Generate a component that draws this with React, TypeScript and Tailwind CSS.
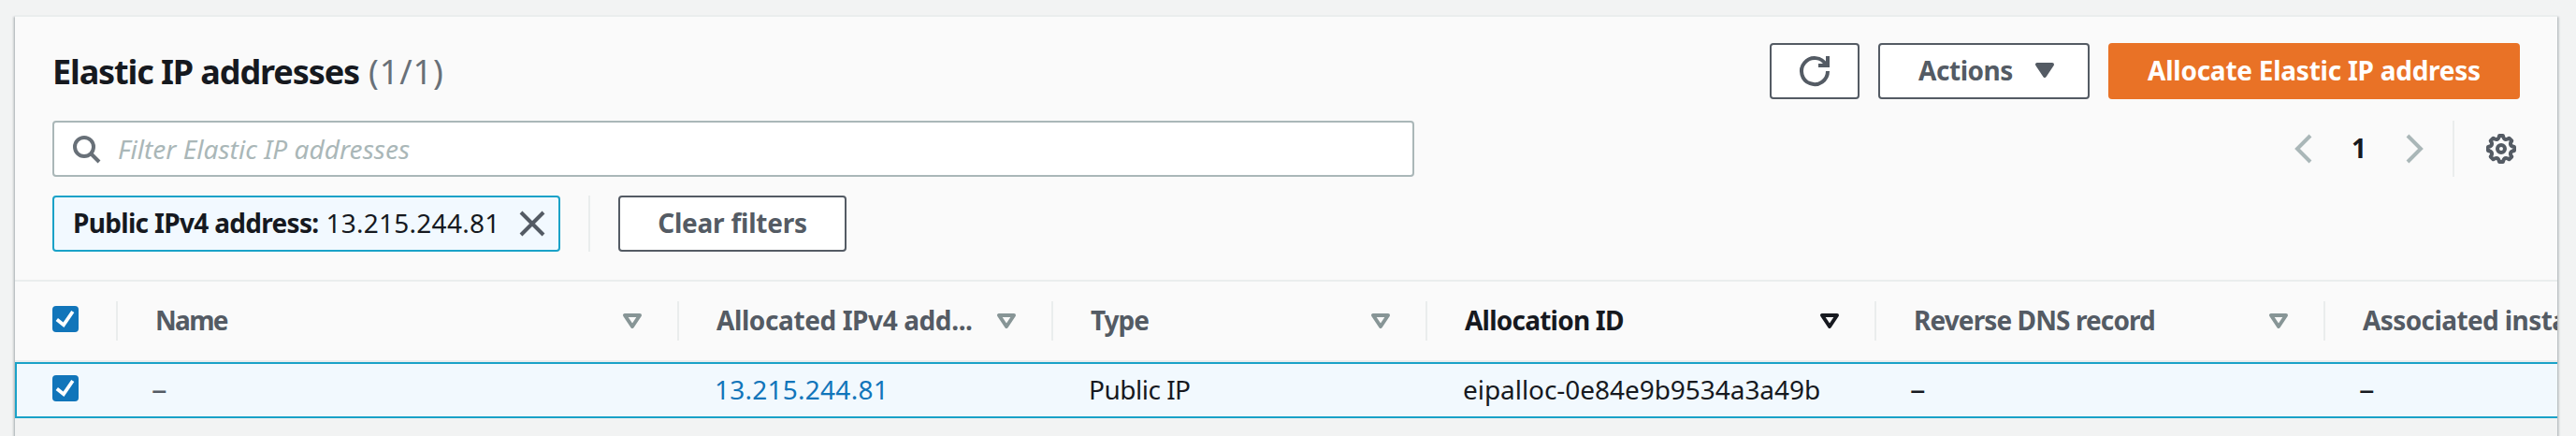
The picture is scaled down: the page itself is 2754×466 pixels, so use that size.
import type { ReactNode } from "react";

function Icon({ children, className = "" }: { children: ReactNode; className?: string }) {
  return (
    <svg
      viewBox="0 0 16 16"
      className={`block size-8 shrink-0 overflow-visible fill-none stroke-current stroke-2 ${className}`}
    >
      {children}
    </svg>
  );
}

function polar(radius: number, degrees: number) {
  const a = (degrees * Math.PI) / 180;
  return `${(8 + radius * Math.cos(a)).toFixed(2)} ${(8 + radius * Math.sin(a)).toFixed(2)}`;
}

const gearPath =
  Array.from({ length: 8 }, (_, k) => {
    const c = k * 45;
    return `${k === 0 ? "M" : "L"}${polar(7.07, c - 8)}L${polar(7.07, c + 8)}Q${polar(4.1, c + 22.5)} ${polar(7.07, c + 37)}`;
  }).join("") + "Z";

function SortIcon({ className = "" }: { className?: string }) {
  return (
    <Icon className={className}>
      <path d="M4 5h8l-4 6z" strokeLinejoin="round" />
    </Icon>
  );
}

function Checkbox() {
  return (
    <span className="block size-7 shrink-0 rounded-[4px] bg-[#1175ba]">
      <svg viewBox="0 0 28 28" className="block size-7 fill-none stroke-white stroke-[3.8]">
        <path d="M4.8 14.5L12 20.3L21.8 6" />
      </svg>
    </span>
  );
}

function Dash({ className = "" }: { className?: string }) {
  return <span className={`-ml-[2px] block text-[33px] leading-[40px] ${className}`}>–</span>;
}

type Column = {
  label: string;
  width: string;
  tracking: string;
  value: ReactNode;
  active?: boolean;
};

const columns: Column[] = [
  { label: "Name", width: "w-[600px]", tracking: "tracking-[-1.7px]", value: <Dash className="text-[#545b64]" /> },
  {
    label: "Allocated IPv4 add...",
    width: "w-[400px]",
    tracking: "tracking-[-0.4px]",
    value: <a className="tracking-[0.25px] text-[#1175ba]">13.215.244.81</a>,
  },
  { label: "Type", width: "w-[400px]", tracking: "tracking-[-1px]", value: <span className="tracking-[-0.5px]">Public IP</span> },
  {
    label: "Allocation ID",
    width: "w-[480px]",
    tracking: "tracking-[-0.77px]",
    value: <span className="tracking-[-0.05px]">eipalloc-0e84e9b9534a3a49b</span>,
    active: true,
  },
  { label: "Reverse DNS record", width: "w-[480px]", tracking: "tracking-[-0.9px]", value: <Dash /> },
  { label: "Associated instance ID", width: "w-[480px]", tracking: "tracking-[-0.6px]", value: <Dash /> },
];

const button =
  "flex h-[60px] items-center justify-center rounded-[4px] border-2 border-[#545b64] bg-white pb-[2px] font-bold text-[#545b64]";

export default function App() {
  return (
    <div className="h-[466px] w-[2754px] overflow-hidden bg-[#f2f3f3] pt-4 pr-5 pl-4 font-['Noto_Sans',sans-serif] text-[28px] leading-[40px] whitespace-nowrap text-[#16191f]">
      <section className="h-[500px] border-t-2 border-[#eaeded] shadow-[0_2px_2px_0_rgba(0,28,36,0.3),2px_2px_2px_0_rgba(0,28,36,0.15),-2px_2px_2px_0_rgba(0,28,36,0.15)]">
        <div className="h-[283px] border-b-2 border-[#eaeded] bg-[#fafafa] px-10 pt-7">
          <div className="flex h-[60px] justify-between">
            <h2 className="flex h-[60px] items-center text-[36px] leading-[41px] font-bold">
              <span className="tracking-[-1.11px]">Elastic IP addresses</span>
              <span className="ml-[10px] font-normal tracking-[0.9px] text-[#687078]">(1/1)</span>
            </h2>
            <div className="flex gap-5">
              <button className="flex h-[60px] w-24 items-start justify-center rounded-[4px] border-2 border-[#545b64] bg-white pt-3 text-[#545b64]">
                <Icon>
                  <path d="M10 5h5V0M15 8a7 7 0 1 1-.9-3.4" />
                </Icon>
              </button>
              <button className={`${button} w-[226px] gap-[18px] pl-[11px]`}>
                <span className="tracking-[-0.45px]">Actions</span>
                <Icon>
                  <path d="M4 5h8l-4 6z" fill="currentColor" strokeLinejoin="round" />
                </Icon>
              </button>
              <button className="flex h-[60px] w-[440px] items-center justify-center rounded-[4px] bg-[#e97226] pb-[2px] font-bold tracking-[-0.25px] text-white">
                Allocate Elastic IP address
              </button>
            </div>
          </div>

          <div className="mt-[23px] flex h-[60px] justify-between">
            <div className="flex h-[60px] w-[1456px] items-center rounded-[4px] border-2 border-[#aab7b8] bg-white pl-[18px]">
              <Icon className="text-[#687078]">
                <circle cx="7" cy="7" r="5" />
                <path d="M15 15l-4.5-4.5" />
              </Icon>
              <span className="ml-[18px] text-[#aab7b8] italic tracking-[0.04px]">Filter Elastic IP addresses</span>
            </div>
            <div className="flex items-center">
              <Icon className="text-[#aab7b8]">
                <path d="M12 1L5 8l7 7" />
              </Icon>
              <span className="w-[88px] pb-[2px] text-center font-bold">1</span>
              <Icon className="text-[#aab7b8]">
                <path d="M4 1l7 7-7 7" />
              </Icon>
              <span className="mr-[34px] ml-6 h-[60px] w-0.5 bg-[#eaeded]" />
              <Icon className="mr-1 text-[#545b64]">
                <circle cx="8" cy="8" r="2" />
                <path d={gearPath} strokeLinejoin="round" />
              </Icon>
            </div>
          </div>

          <div className="mt-5 flex h-[60px]">
            <div className="flex h-[60px] w-[543px] items-start rounded-[4px] border-2 border-[#1aa2c8] bg-[#f2f9ff] pt-[7px] pl-5">
              <span className="font-bold tracking-[-0.68px]">Public IPv4 address:</span>
              <span className="ml-[8px] tracking-[0.25px]">13.215.244.81</span>
              <Icon className="mt-[5px] mr-[12px] ml-auto text-[#545b64]">
                <path d="M2 2l12 12M14 2L2 14" />
              </Icon>
            </div>
            <span className="mx-[30px] w-0.5 bg-[#eaeded]" />
            <button className={`${button} w-[244px] tracking-[-0.24px]`}>Clear filters</button>
          </div>
        </div>

        <div className="overflow-hidden">
          <div className="flex h-[86px] w-max border-b-2 border-[#eaeded] bg-[#fafafa]">
            <div className="flex w-[110px] items-start justify-between pl-10">
              <span className="mt-[26px]">
                <Checkbox />
              </span>
              <span className="mt-[21px] h-[42px] w-0.5 bg-[#eaeded]" />
            </div>
            {columns.map((c) => (
              <div
                key={c.label}
                className={`${c.width} ${c.active ? "text-[#16191f]" : "text-[#545b64]"} flex shrink-0 items-start pl-10 font-bold`}
              >
                <span className={`${c.tracking} mt-[21px]`}>{c.label}</span>
                <SortIcon className={`mt-[26px] mr-[32px] ml-auto ${c.active ? "" : "text-[#879596]"}`} />
                <span className="mt-[21px] h-[42px] w-0.5 bg-[#eaeded]" />
              </div>
            ))}
          </div>
          <div className="flex h-[60px] w-max border-2 border-[#1aa2c8] bg-[#f2f9fe]">
            <div className="w-[108px] pt-3 pl-[38px]">
              <Checkbox />
            </div>
            {columns.map((c) => (
              <div key={c.label} className={`${c.width} shrink-0 pt-[7px] pl-[38px]`}>
                {c.value}
              </div>
            ))}
          </div>
        </div>
      </section>
    </div>
  );
}
